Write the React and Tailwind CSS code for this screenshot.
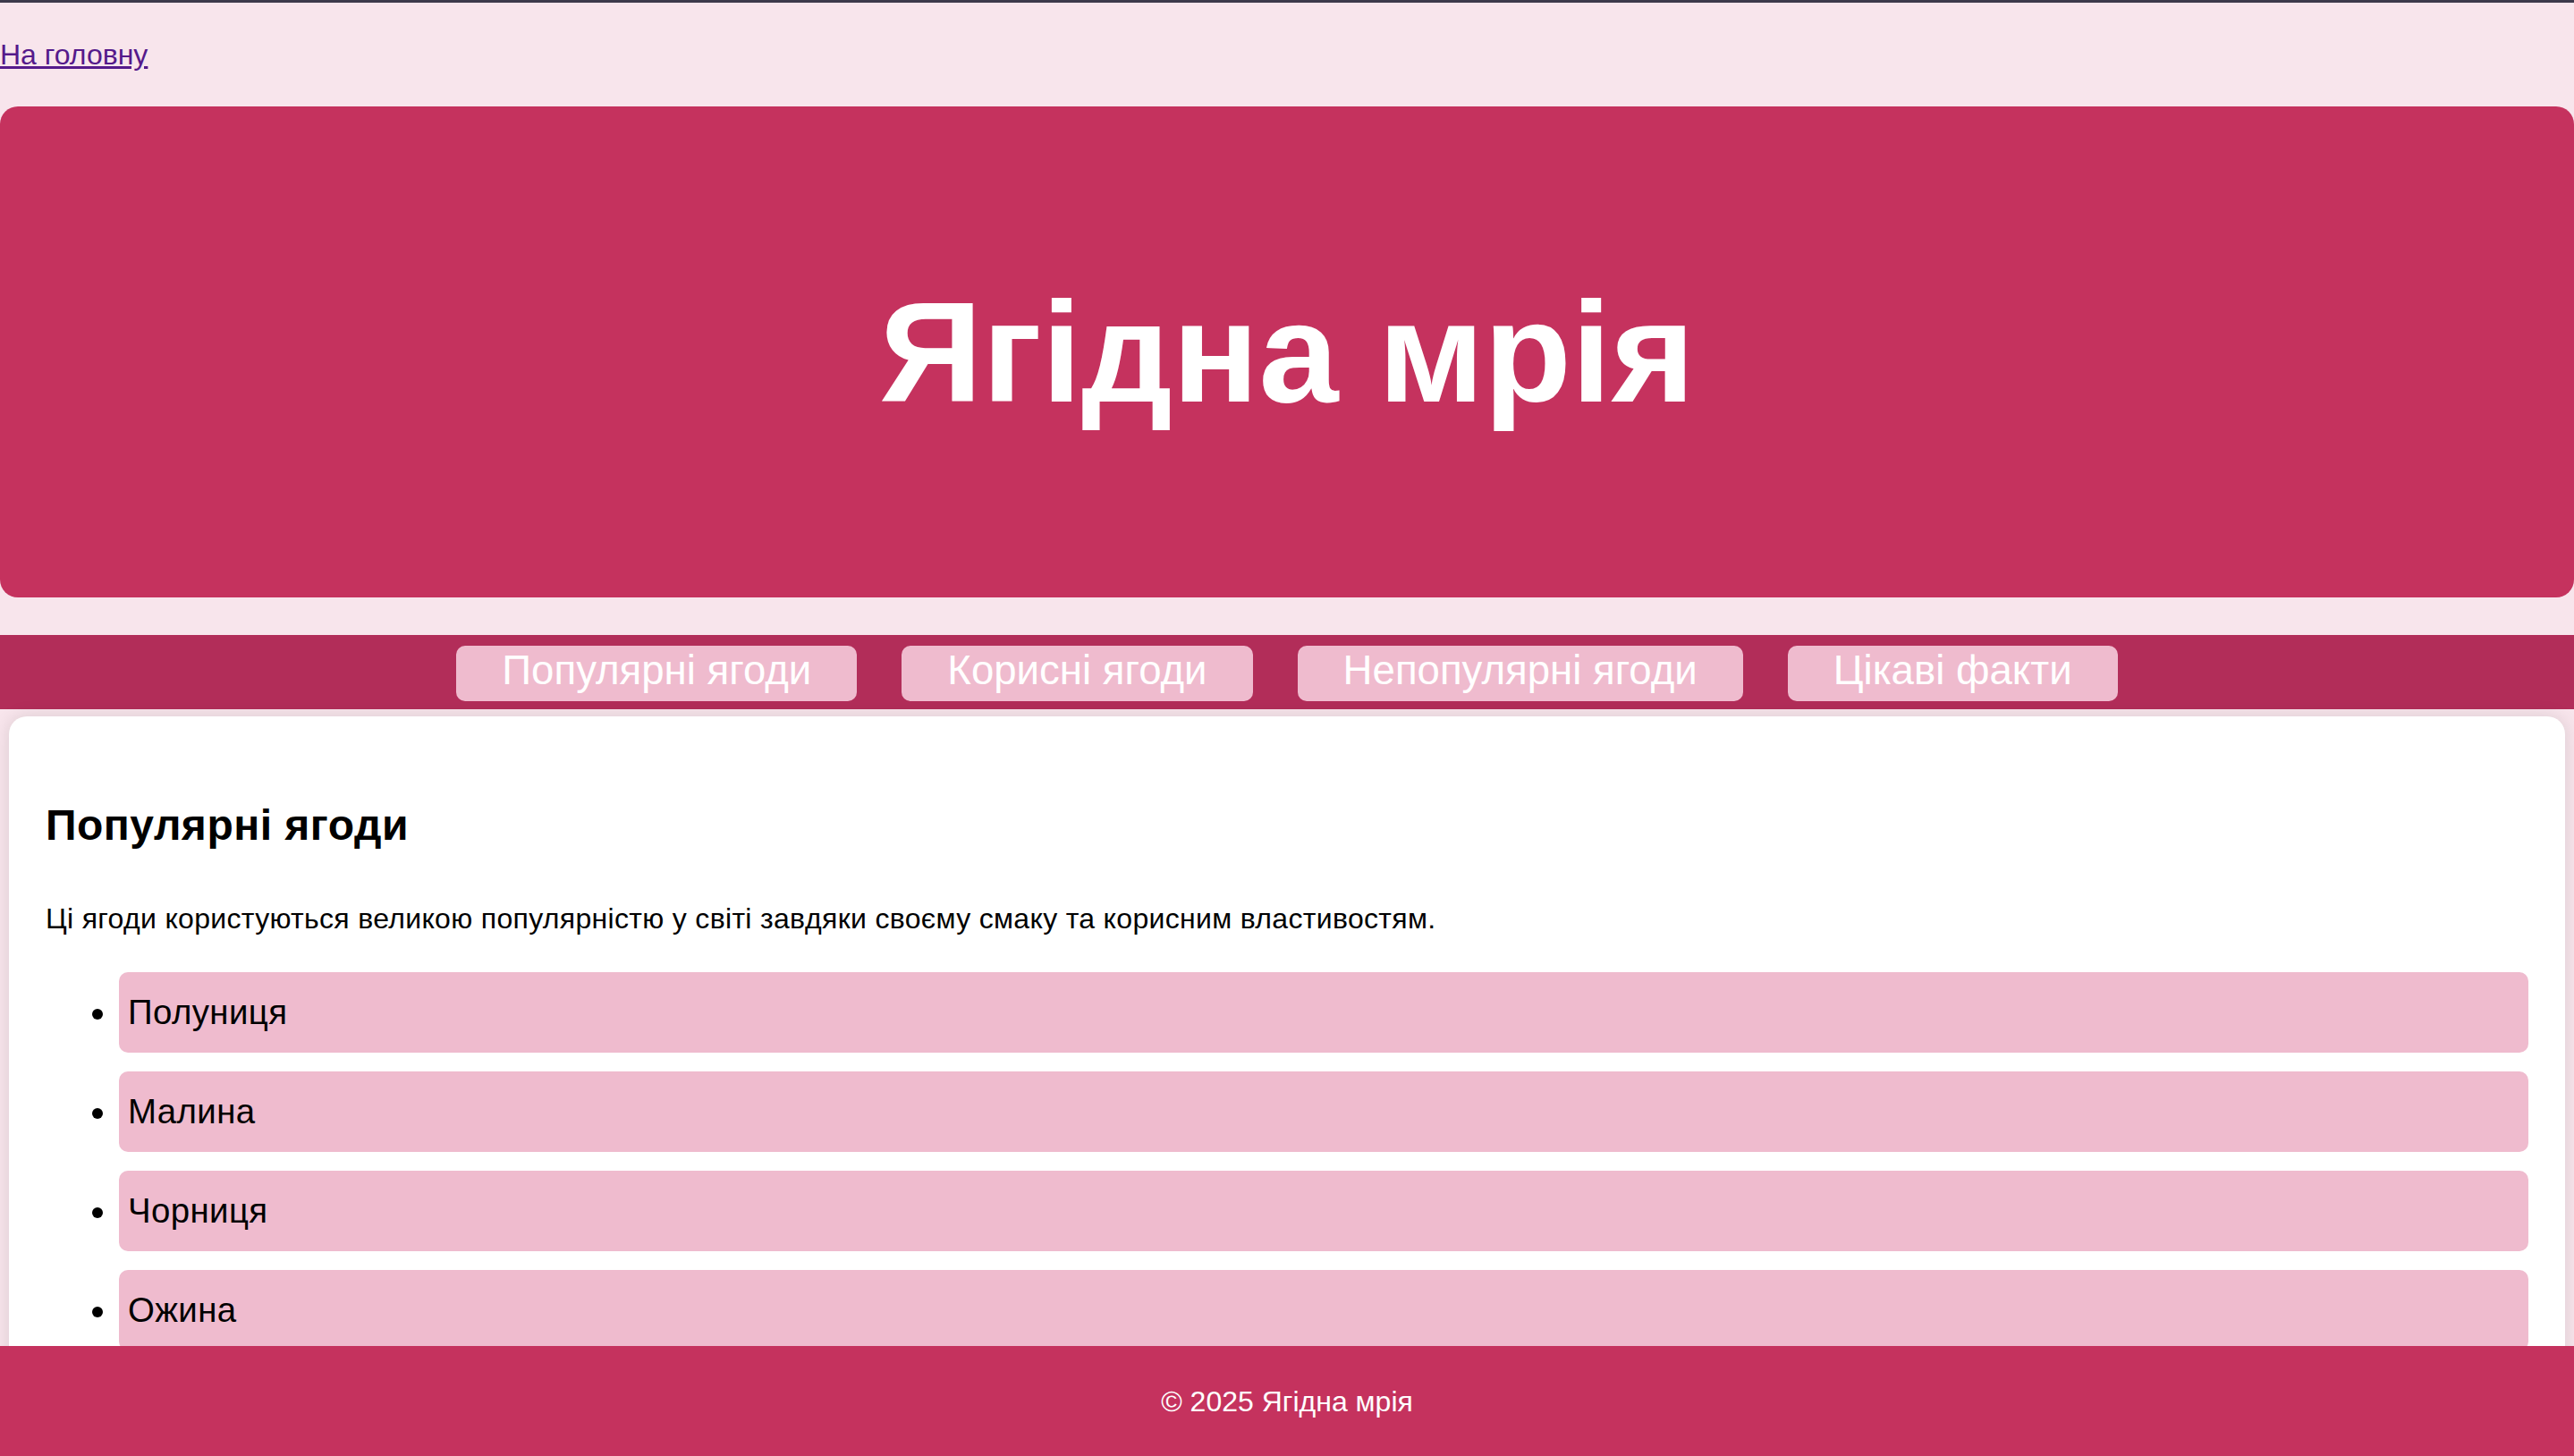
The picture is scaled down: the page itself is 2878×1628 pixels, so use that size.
export default function App() {
  const sections = ["Популярні ягоди", "Корисні ягоди", "Непопулярні ягоди", "Цікаві факти"];
  const berries = ["Полуниця", "Малина", "Чорниця", "Ожина", "Смородина"];

  return (
    <div className="min-h-screen bg-[#f8e5ec] border-t-[3px] border-[#3d3a4b] font-['Liberation_Sans',Arial,sans-serif] text-black">
      {/* back link */}
      <div className="h-[116px] pt-[40px]">
        <a href="#" className="text-[32px] leading-[37px] text-[#551a8b] underline">
          На головну
        </a>
      </div>

      <header className="h-[549px] rounded-[20px] bg-[#c5325e] flex items-center justify-center">
        <h1 className="text-[160px] font-bold leading-none text-white">Ягідна мрія</h1>
      </header>

      <nav className="mt-[42px] h-[83px] bg-[#b22d59] flex justify-center gap-[50px] pt-[12px]">
        {sections.map(s => (
          <a
            key={s}
            href="#"
            className="h-[62px] rounded-[10px] bg-[#efbbce] px-[51px] pt-[1px] text-[45.6px] leading-[53px] text-white"
          >
            {s}
          </a>
        ))}
      </nav>

      <main className="mx-[10px] mt-[8px] rounded-[20px] bg-white px-[41px] pt-[94px] pb-[200px] shadow-[0_0_20px_rgba(0,0,0,0.12)]">
        <h2 className="text-[48px] font-bold leading-[55px] tracking-[0.5px]">Популярні ягоди</h2>
        <p className="mt-[59px] text-[32px] leading-[37px] tracking-[0.32px]">
          Ці ягоди користуються великою популярністю у світі завдяки своєму смаку та корисним властивостям.
        </p>
        <ul className="mt-[41px] list-disc pl-[82px] space-y-[21px]">
          {berries.map(b => (
            <li key={b} className="rounded-[10px] bg-[#efbbce] py-[23px] pl-[10px] text-[38.4px] leading-[44px] tracking-[0.4px]">
              {b}
            </li>
          ))}
        </ul>
      </main>

      <footer className="fixed inset-x-0 bottom-0 h-[123px] bg-[#c5325e] flex items-center justify-center text-[32px] text-white">
        © 2025 Ягідна мрія
      </footer>
    </div>
  );
}
